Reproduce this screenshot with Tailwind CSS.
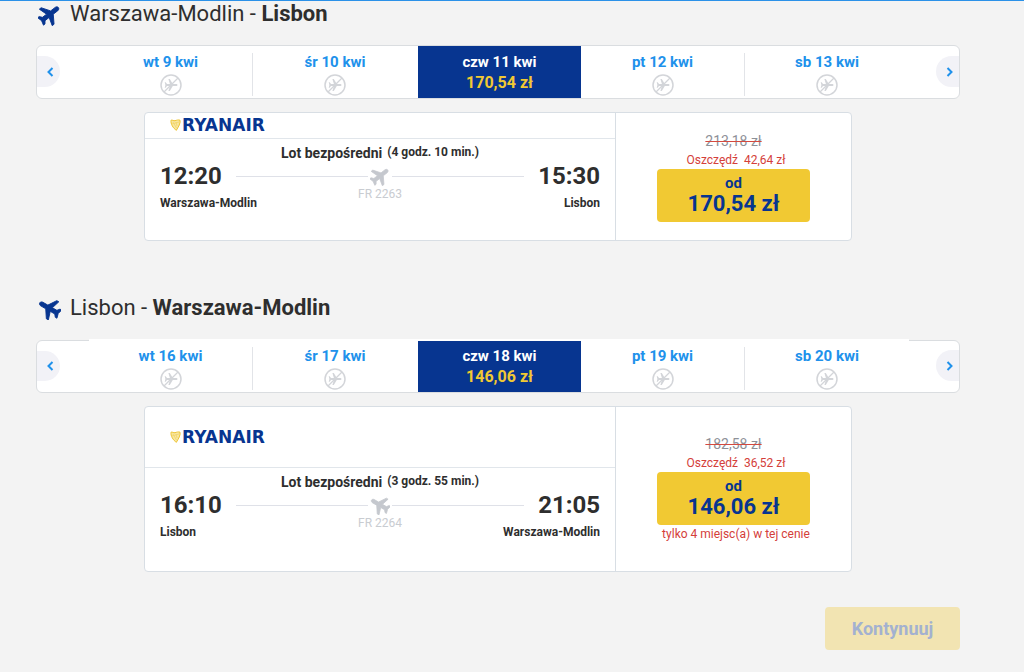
<!DOCTYPE html>
<html lang="pl">
<head>
  <meta charset="UTF-8" />
  <meta name="viewport" content="width=device-width, initial-scale=1" />
  <title>Wybierz loty</title>
  <script src="https://cdn.jsdelivr.net/npm/@tailwindcss/browser@4"></script>
</head>
<body class="bg-[#f3f3f3] border-t border-[#2b91e8] text-[#2e2e2e] font-[Roboto,sans-serif]">

  <!-- Shared icons -->
  <svg class="hidden">
    <symbol id="plane" viewBox="1 1 22 22">
      <path transform="rotate(52 12 12)" stroke="currentColor" stroke-width=".8" stroke-linejoin="round" d="M22 16.500v-2.200l-8-5.300V3.500c0-1-.8-2.300-2-2.300s-2 1.300-2 2.300V9l-8 5.300v2.200l8-2.500v5l-2.500 2v1.800L12 21.600l4.500 1.200V21L14 19v-5z" />
    </symbol>
    <symbol id="plane-back" viewBox="1 1 22 22">
      <path transform="rotate(-60 12 12)" stroke="currentColor" stroke-width=".8" stroke-linejoin="round" d="M22 16.500v-2.200l-8-5.300V3.500c0-1-.8-2.300-2-2.300s-2 1.300-2 2.300V9l-8 5.300v2.200l8-2.500v5l-2.500 2v1.800L12 21.600l4.500 1.200V21L14 19v-5z" />
    </symbol>
    <symbol id="no-flight" viewBox="0 0 22 22">
      <circle cx="11" cy="11" r="10" fill="none" stroke="currentColor" stroke-width="1.500" />
      <path fill="currentColor" d="M17.500 11c0-.7-.7-1-1.400-1h-3.300L9.800 5H8.400l1.500 5H7L5.700 8.300h-1L5.400 11l-.7 2.700h1L7 12h2.900l-1.500 5h1.400l3-5h3.300c.7 0 1.400-.3 1.400-1z" />
      <path stroke="currentColor" stroke-width="1.300" d="M4 18 18 4" />
    </symbol>
    <symbol id="harp" viewBox="0 0 11 12">
      <path fill="#f8e6a0" d="M1 1.500 10 1c1 3-1 6-3.500 10.500C3 9 .5 5 1 1.500z" />
      <path fill="none" stroke="#eec536" d="M6.500 11.500C3 9 .5 5 1 1.200c1.500-.6 2.500 1 4 .5s3.500-1.200 5-.5c.7 3-1.500 6.500-3.500 9.800" />
      <path fill="none" stroke="#f1d264" stroke-width=".7" d="m3 3 3.500 6M6 3l1 4M2 5l7-2" />
    </symbol>
  </svg>

  <main class="pl-9 pr-16">

    <!-- Outbound -->
    <section>
      <h2 class="flex items-center h-[26px] pb-[2px] text-[22px]">
        <svg class="w-[23px] h-[23px] ml-[2px] mr-[9px] mt-[2px] fill-current text-[#073590]"><use href="#plane" /></svg>
        <span>Warszawa-Modlin - <b>Lisbon</b></span>
      </h2>

      <div class="flex items-start h-[54px] mt-[18px] bg-white border border-[#dadde0] rounded-md">
        <div class="w-[52px] pt-[10px]">
          <button aria-label="Poprzednie dni" class="flex items-center justify-center w-[23px] h-[31px] pl-1 bg-[#f2f2f7] rounded-r-full text-[#2091eb]">
            <svg class="w-[7px] h-[10px]" viewBox="0 0 7 10" fill="none" stroke="currentColor" stroke-width="2"><path d="M5.500 1 1.500 5l4 4" /></svg>
          </button>
        </div>
        <ul class="flex-1 grid grid-cols-5 h-[52px] text-[15px] leading-5 font-bold text-center text-[#2091eb]">
          <li class="flex"><a href="#" class="flex-1 flex flex-col items-center pt-[6px]">wt 9 kwi <svg class="w-[22px] h-[22px] mt-[2px] text-[#d3d5d9]"><use href="#no-flight" /></svg></a><i class="w-px h-[43px] mt-[7px] bg-[#e2e4e8]"></i></li>
          <li><a href="#" class="flex flex-col items-center pt-[6px]">śr 10 kwi <svg class="w-[22px] h-[22px] mt-[2px] text-[#d3d5d9]"><use href="#no-flight" /></svg></a></li>
          <li class="ml-px bg-[#073590] text-white"><a href="#" class="flex flex-col items-center pt-[6px]">czw 11 kwi <span class="text-[16px]/[21px] text-[#f1c933]">170,54 zł</span></a></li>
          <li class="flex"><a href="#" class="flex-1 flex flex-col items-center pt-[6px]">pt 12 kwi <svg class="w-[22px] h-[22px] mt-[2px] text-[#d3d5d9]"><use href="#no-flight" /></svg></a><i class="w-px h-[43px] mt-[7px] bg-[#e2e4e8]"></i></li>
          <li><a href="#" class="flex flex-col items-center pt-[6px]">sb 13 kwi <svg class="w-[22px] h-[22px] mt-[2px] text-[#d3d5d9]"><use href="#no-flight" /></svg></a></li>
        </ul>
        <div class="w-[50px] pt-[10px] flex justify-end">
          <button aria-label="Następne dni" class="flex items-center justify-center w-[23px] h-[31px] pl-1 bg-[#f2f2f7] rounded-l-full text-[#2091eb]">
            <svg class="w-[7px] h-[10px]" viewBox="0 0 7 10" fill="none" stroke="currentColor" stroke-width="2"><path d="m1.500 1 4 4-4 4" /></svg>
          </button>
        </div>
      </div>

      <article class="flex max-w-[708px] mx-auto mt-[13px] bg-white border border-[#d8dee4] rounded">
        <div class="flex-1 border-r border-[#d8dee4]">
          <header class="flex items-center h-[26px] pl-[25px] pb-px border-b border-[#e1e6eb]">
            <svg class="w-[11px] h-[12px] mr-px"><use href="#harp" /></svg>
            <span class="text-[17px] leading-5 font-bold text-[#073590] font-['DejaVu_Sans',sans-serif]">RYANAIR</span>
          </header>
          <div class="px-[15px] pt-1 h-[101px]">
            <p class="flex justify-center gap-[5px] h-[18px] text-[14px] leading-5 font-bold">Lot bezpośredni <span class="text-[12px] leading-[18px]">(4 godz. 10 min.)</span></p>
            <div class="grid grid-cols-[60px_1fr_60px] gap-4">
              <div class="whitespace-nowrap">
                <div class="text-[24px] leading-[30px] font-bold">12:20</div>
                <div class="text-[12px] leading-6 font-bold">Warszawa-Modlin</div>
              </div>
              <div class="text-center">
                <div class="flex items-center gap-[2px] h-[30px]">
                  <i class="flex-1 h-px bg-[#dfe1e8]"></i>
                  <svg class="w-5 h-5 fill-current text-[#c5c8ce]"><use href="#plane" /></svg>
                  <i class="flex-1 h-px bg-[#dfe1e8]"></i>
                </div>
                <div class="text-[12px] leading-4 -mt-[5px] text-[#c9ccd1]">FR 2263</div>
              </div>
              <div class="flex flex-col items-end whitespace-nowrap">
                <div class="text-[24px] leading-[30px] font-bold">15:30</div>
                <div class="text-[12px] leading-6 font-bold">Lisbon</div>
              </div>
            </div>
          </div>
        </div>
        <div class="w-[235px] flex flex-col items-center justify-center">
          <del class="text-[14px] leading-5 text-[#8e9198] decoration-[#d4493f]">213,18 zł</del>
          <span class="pl-[5px] text-[12px] leading-[18px] text-[#d4403a]">Oszczędź&nbsp; 42,64 zł</span>
          <button class="w-[153px] h-[53px] pb-[3px] bg-[#f1c933] rounded text-[#073590] font-bold">
            <span class="block text-[15px] leading-5">od</span>
            <span class="block text-[22px] leading-[22px]">170,54 zł</span>
          </button>
        </div>
      </article>
    </section>

    <!-- Return -->
    <section class="mt-[54px]">
      <h2 class="flex items-center h-[26px] pb-[2px] text-[22px]">
        <svg class="w-[23px] h-[23px] ml-[2px] mr-[9px] mt-[2px] fill-current text-[#073590]"><use href="#plane-back" /></svg>
        <span>Lisbon - <b>Warszawa-Modlin</b></span>
      </h2>

      <div class="flex items-start h-[53px] mt-[19px] bg-white border border-[#dadde0] rounded-md">
        <div class="w-[52px] pt-[10px]">
          <button aria-label="Poprzednie dni" class="flex items-center justify-center w-[23px] h-[30px] pl-1 bg-[#f2f2f7] rounded-r-full text-[#2091eb]">
            <svg class="w-[7px] h-[10px]" viewBox="0 0 7 10" fill="none" stroke="currentColor" stroke-width="2"><path d="M5.500 1 1.500 5l4 4" /></svg>
          </button>
        </div>
        <ul class="flex-1 grid grid-cols-5 h-[53px] -mt-[2px] pt-[2px] bg-white text-[15px] leading-5 font-bold text-center text-[#2091eb]">
          <li class="flex"><a href="#" class="flex-1 flex flex-col items-center pt-[5px]">wt 16 kwi <svg class="w-[22px] h-[22px] mt-[2px] text-[#d3d5d9]"><use href="#no-flight" /></svg></a><i class="w-px h-[43px] mt-[6px] bg-[#e2e4e8]"></i></li>
          <li><a href="#" class="flex flex-col items-center pt-[5px]">śr 17 kwi <svg class="w-[22px] h-[22px] mt-[2px] text-[#d3d5d9]"><use href="#no-flight" /></svg></a></li>
          <li class="ml-px bg-[#073590] text-white"><a href="#" class="flex flex-col items-center pt-[5px]">czw 18 kwi <span class="text-[16px]/[21px] text-[#f1c933]">146,06 zł</span></a></li>
          <li class="flex"><a href="#" class="flex-1 flex flex-col items-center pt-[5px]">pt 19 kwi <svg class="w-[22px] h-[22px] mt-[2px] text-[#d3d5d9]"><use href="#no-flight" /></svg></a><i class="w-px h-[43px] mt-[6px] bg-[#e2e4e8]"></i></li>
          <li><a href="#" class="flex flex-col items-center pt-[5px]">sb 20 kwi <svg class="w-[22px] h-[22px] mt-[2px] text-[#d3d5d9]"><use href="#no-flight" /></svg></a></li>
        </ul>
        <div class="w-[50px] pt-[9px] flex justify-end">
          <button aria-label="Następne dni" class="flex items-center justify-center w-[23px] h-[31px] pl-1 bg-[#f2f2f7] rounded-l-full text-[#2091eb]">
            <svg class="w-[7px] h-[10px]" viewBox="0 0 7 10" fill="none" stroke="currentColor" stroke-width="2"><path d="m1.500 1 4 4-4 4" /></svg>
          </button>
        </div>
      </div>

      <article class="flex max-w-[708px] mx-auto mt-[13px] bg-white border border-[#d8dee4] rounded">
        <div class="flex-1 border-r border-[#d8dee4]">
          <header class="flex items-center h-[61px] pl-[25px] pb-px border-b border-[#e1e6eb]">
            <svg class="w-[11px] h-[12px] mr-px"><use href="#harp" /></svg>
            <span class="text-[17px] leading-5 font-bold text-[#073590] font-['DejaVu_Sans',sans-serif]">RYANAIR</span>
          </header>
          <div class="px-[15px] pt-1 h-[103px]">
            <p class="flex justify-center gap-[5px] h-[18px] text-[14px] leading-5 font-bold">Lot bezpośredni <span class="text-[12px] leading-[18px]">(3 godz. 55 min.)</span></p>
            <div class="grid grid-cols-[60px_1fr_60px] gap-4">
              <div class="whitespace-nowrap">
                <div class="text-[24px] leading-[30px] font-bold">16:10</div>
                <div class="text-[12px] leading-6 font-bold">Lisbon</div>
              </div>
              <div class="text-center">
                <div class="flex items-center gap-[2px] h-[30px]">
                  <i class="flex-1 h-px bg-[#dfe1e8]"></i>
                  <svg class="w-5 h-5 fill-current text-[#c5c8ce]"><use href="#plane-back" /></svg>
                  <i class="flex-1 h-px bg-[#dfe1e8]"></i>
                </div>
                <div class="text-[12px] leading-4 -mt-[5px] text-[#c9ccd1]">FR 2264</div>
              </div>
              <div class="flex flex-col items-end whitespace-nowrap">
                <div class="text-[24px] leading-[30px] font-bold">21:05</div>
                <div class="text-[12px] leading-6 font-bold">Warszawa-Modlin</div>
              </div>
            </div>
          </div>
        </div>
        <div class="w-[235px] flex flex-col items-center justify-center">
          <del class="text-[14px] leading-5 text-[#8e9198] decoration-[#d4493f]">182,58 zł</del>
          <span class="pl-[5px] text-[12px] leading-[18px] text-[#d4403a]">Oszczędź&nbsp; 36,52 zł</span>
          <button class="w-[153px] h-[53px] pb-[3px] bg-[#f1c933] rounded text-[#073590] font-bold">
            <span class="block text-[15px] leading-5">od</span>
            <span class="block text-[22px] leading-[22px]">146,06 zł</span>
          </button>
          <span class="pl-[5px] pb-[2px] text-[12px] leading-[18px] text-[#d4403a]">tylko 4 miejsc(a) w tej cenie</span>
        </div>
      </article>
    </section>

    <div class="flex justify-end mt-[35px]">
      <button disabled class="w-[135px] h-[43px] bg-[#f2e4b2] rounded text-[18px] font-bold text-[#a3b1d0]">Kontynuuj</button>
    </div>
  </main>

</body>
</html>
